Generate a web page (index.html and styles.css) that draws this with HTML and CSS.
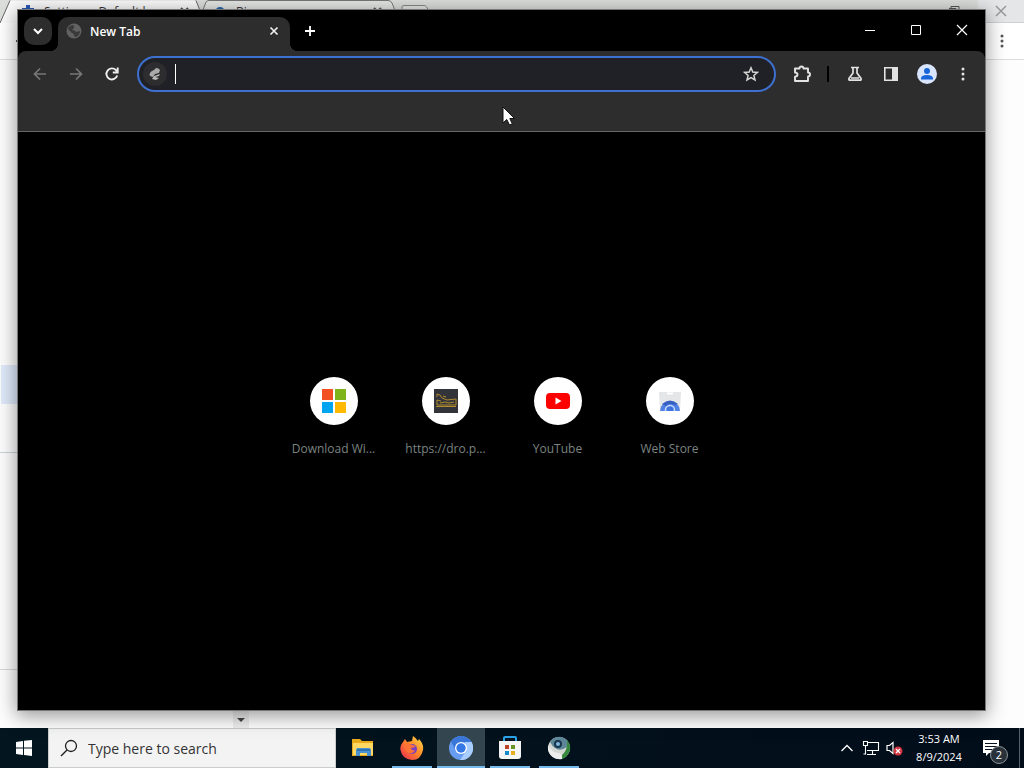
FILE: index.html
```html
<!DOCTYPE html>
<html lang="en">
<head>
<meta charset="utf-8">
<title>New Tab</title>
<link rel="stylesheet" href="styles.css">
</head>
<body>
<main class="desktop">
  <section class="back-window" aria-label="Settings window">
    <div class="back-strip">
      <svg class="back-shapes" width="432" height="23" viewBox="0 0 432 23" aria-hidden="true">
        <path d="M198 23 206 2Q207 .5 209 .5H388Q391 .5 392 3L400 23Z" fill="#e4e6e4" stroke="#777"/>
        <path d="M0 23 10 .5H194Q196 .5 197 3L206 23Z" fill="#fbfbfb"/>
        <path d="M0 23 10 .5M196 .5 205 23" fill="none" stroke="#666"/>
        <path d="M402 12V7Q402 5.500 404 5.500H424Q427 5.500 429 12" fill="#e4e6e4" stroke="#888"/>
        <path d="M22 12V8h4V5h4v3h4v4z" fill="#2859b8"/>
        <circle cx="220" cy="12" r="4" fill="none" stroke="#2368ac" stroke-width="2"/>
        <path d="m181 8 7 7m0-7-7 7m193-7 7 7m0-7-7 7" stroke="#555" stroke-width="2"/>
      </svg>
      <div class="back-tabs"><span>Settings - Default br</span><span>Bing</span></div>
      <div class="back-controls">
        <svg width="46" height="22" viewBox="0 0 46 22" aria-hidden="true"><path d="M17 8.500h7V14M19 8V6.500H27V12" fill="none" stroke="#555"/></svg>
        <button class="back-close" aria-label="Close settings"><svg width="12" height="12" viewBox="0 0 12 12"><path d="m1 1 10 10M11 1 1 11" stroke="#999" stroke-width="1.500"/></svg></button>
      </div>
    </div>
    <div class="back-toolbar">
      <svg width="18" height="16" viewBox="0 0 18 16" aria-hidden="true"><path d="M18 8h-2" stroke="#555" stroke-width="2"/></svg>
      <button class="back-more" aria-label="Settings menu"><svg width="4" height="14" viewBox="0 0 4 14" fill="#555"><circle cx="2" cy="2" r="1.500"/><circle cx="2" cy="7" r="1.500"/><circle cx="2" cy="12" r="1.500"/></svg></button>
    </div>
    <div class="back-page">
      <div class="back-nav"><div class="back-selected"></div></div>
      <div class="back-group"></div>
      <div class="back-foot"><span class="scroll-arrow"><svg width="8" height="4" viewBox="0 0 8 4"><path d="M0 0h8L4 4z" fill="#444"/></svg></span></div>
    </div>
  </section>

  <section class="window" aria-label="Browser">
    <header class="titlebar">
      <button class="tab-search" aria-label="Search tabs"><svg width="12" height="12" viewBox="0 0 12 12"><path d="m2 4 4 4 4-4" fill="none" stroke="#fff" stroke-width="2"/></svg></button>
      <div class="tab">
        <svg width="16" height="16" viewBox="0 0 16 16" aria-hidden="true"><circle cx="8" cy="8" r="7.500" fill="#626262"/><path d="M2 5q2-3 5-3 2 1 1 3L6 7q3 0 4 2l4-1q0 4-4 6-3-1-2-3-3-1-4-3-2-1-2-3Z" fill="#3a3a3a"/></svg>
        <span class="tab-title">New Tab</span>
        <button class="icon-button" aria-label="Close tab"><svg width="10" height="10" viewBox="0 0 10 10"><path d="m1.500 1.500 7 7M8.500 1.500l-7 7" stroke="#eee" stroke-width="1.700"/></svg></button>
      </div>
      <button class="new-tab" aria-label="New tab"><svg width="12" height="12" viewBox="0 0 12 12"><path d="M6 1v10M1 6h10" stroke="#fff" stroke-width="1.800"/></svg></button>
      <div class="window-controls">
        <button aria-label="Minimize"><svg width="12" height="12" viewBox="0 0 12 12"><path d="M1 6.500h10" stroke="#fff"/></svg></button>
        <button aria-label="Maximize"><svg width="12" height="12" viewBox="0 0 12 12"><path d="M1.500 1.500h9v9h-9z" fill="none" stroke="#fff"/></svg></button>
        <button aria-label="Close"><svg width="12" height="12" viewBox="0 0 12 12"><path d="m1 1 10 10M11 1 1 11" stroke="#fff" stroke-width="1.200"/></svg></button>
      </div>
    </header>
    <div class="chrome">
      <div class="toolbar">
        <button class="tool" aria-label="Back"><svg width="16" height="16" viewBox="0 0 16 16"><path d="M14 8H3m5-5.500L2.500 8 8 13.500" fill="none" stroke="#777" stroke-width="1.700"/></svg></button>
        <button class="tool" aria-label="Forward"><svg width="16" height="16" viewBox="0 0 16 16"><path d="M2 8h11M8 2.500 13.500 8 8 13.500" fill="none" stroke="#777" stroke-width="1.700"/></svg></button>
        <button class="tool" aria-label="Reload"><svg width="16" height="16" viewBox="0 0 16 16"><path d="M13.200 9.500A5.500 5.500 0 1 1 12 4.200L13.500 6M13.700 1.500V6.500H8.800" fill="none" stroke="#eee" stroke-width="1.900"/></svg></button>
        <div class="omnibox">
          <svg width="26" height="26" viewBox="0 0 26 26" aria-hidden="true"><circle cx="13" cy="13" r="12" fill="#2d2d2f"/><path d="M8 12q1-2 4-3l2-2q3 0 4 2l-1 3-4 1-2 3-3-1q-1-1 0-3Z" fill="#aaa"/><path d="m12 15 6-2-1 2-4 1 4 1-3 2-4-1Z" fill="#bbb"/></svg>
          <span class="caret"></span>
          <input type="text" aria-label="Address and search bar">
          <button class="icon-button" aria-label="Bookmark this tab"><svg width="16" height="16" viewBox="0 0 16 16"><path d="m8 1.800 1.800 4.200 4.600.4-3.500 3 1.100 4.500L8 11.500l-4 2.400 1.100-4.500-3.500-3 4.600-.4Z" fill="none" stroke="#d5d5d5" stroke-width="1.500"/></svg></button>
        </div>
        <button class="tool" aria-label="Extensions"><svg width="20" height="20" viewBox="0 0 20 20"><path d="M3 4.500H7.500Q7.500 2.500 9.500 2.500T11.500 4.500H16V8.500Q18 8.500 18 10.500T16 12.500V17H3V12.700Q5.500 12.500 5.500 10.600T3 8.500Z" fill="none" stroke="#e3e3e3" stroke-width="1.900" stroke-linejoin="round"/></svg></button>
        <span class="separator"></span>
        <button class="tool" aria-label="Experiments"><svg width="16" height="16" viewBox="0 0 16 16"><path d="M4 1.500h8M6 2v5L2 12.500Q1.500 14.200 3 14.200H13Q14.500 14.200 14 12.500L10 7V2M4 12h8" fill="none" stroke="#e3e3e3" stroke-width="1.700"/></svg></button>
        <button class="tool" aria-label="Side panel"><svg width="16" height="16" viewBox="0 0 16 16"><path d="M1.800 1.800h12.400v12.400H1.800z" fill="none" stroke="#e3e3e3" stroke-width="1.600"/><path d="M9 2h5v12H9z" fill="#e3e3e3"/></svg></button>
        <button class="tool" aria-label="Profile"><svg width="20" height="20" viewBox="0 0 20 20"><circle cx="10" cy="10" r="10" fill="#d8e5fc"/><circle cx="10" cy="7" r="3" fill="#1765d8"/><path d="M4 14.500Q4 11 10 11T16 14.500V15.500H4Z" fill="#1765d8"/></svg></button>
        <button class="tool" aria-label="Menu"><svg width="4" height="16" viewBox="0 0 4 16" fill="#e3e3e3"><circle cx="2" cy="3" r="1.500"/><circle cx="2" cy="8" r="1.500"/><circle cx="2" cy="13" r="1.500"/></svg></button>
      </div>
      <div class="bookmarks"></div>
    </div>
    <nav class="page" aria-label="Shortcuts">
      <a class="tile" href="#windows"><span class="tile-icon"><svg width="24" height="24" viewBox="0 0 24 24"><path d="M0 0h11v11H0z" fill="#f25022"/><path d="M13 0h11v11H13z" fill="#7fb51b"/><path d="M0 13h11v11H0z" fill="#00a4ef"/><path d="M13 13h11v11H13z" fill="#ffb900"/></svg></span><span class="tile-label">Download Wi...</span></a>
      <a class="tile" href="#dro"><span class="tile-icon"><svg width="24" height="24" viewBox="0 0 24 24"><path d="M0 0h24v24H0z" fill="#33343a"/><path d="M3 8V5l3 1 2 3 5 2 9-1v6H3V11l4 1M2 17.500h20M6 14l5-1 4 1 5-1M9 7l3 1" fill="none" stroke="#b18c2c"/></svg></span><span class="tile-label">https://dro.p...</span></a>
      <a class="tile" href="#youtube"><span class="tile-icon"><svg width="24" height="24" viewBox="0 0 24 24"><rect y="4" width="24" height="16" rx="4" fill="#f00"/><path d="m9.500 8.500 6 3.500-6 3.500z" fill="#fff"/></svg></span><span class="tile-label">YouTube</span></a>
      <a class="tile" href="#store"><span class="tile-icon"><svg width="24" height="24" viewBox="0 0 24 24"><path d="M1 3h22l-1 19H2z" fill="#e4e6e8"/><path d="M9 4.500h6" stroke="#fff" stroke-width="2"/><path d="M2 22a10 10 0 0 1 20 0Z" fill="#4f80e4"/><path d="M4 15q8-7 16 0l-4 1q-4-3-8 1Z" fill="#355fc0"/><circle cx="12" cy="21" r="4.500" fill="#3e73df" stroke="#c9dbfa" stroke-width="1.500"/><path d="M0 22h24v3H0z" fill="#fff"/></svg></span><span class="tile-label">Web Store</span></a>
    </nav>
  </section>
  <svg class="pointer" width="13" height="20" viewBox="0 0 13 20" aria-hidden="true"><path d="M1 1v16l3.800-3.500L7.500 19l2.800-1.200L7.800 12.500H12.500Z" fill="#fff" stroke="#111"/></svg>
</main>

<footer class="taskbar">
  <button class="start" aria-label="Start"><svg width="16" height="16" viewBox="0 0 16 16"><path d="m0 2 7-1v6.500H0Zm8-1.200L16 0v7.500H8ZM0 8.500h7V15l-7-1Zm8 0h8V16l-8-1Z" fill="#fff"/></svg></button>
  <label class="search">
    <svg width="18" height="18" viewBox="0 0 18 18" aria-hidden="true"><circle cx="11" cy="7" r="5.500" fill="none" stroke="#222" stroke-width="1.300"/><path d="m7 11-6 6" stroke="#222" stroke-width="1.500"/></svg>
    <input type="text" placeholder="Type here to search" aria-label="Type here to search">
  </label>
  <div class="apps">
    <button class="app" aria-label="File Explorer"><svg width="24" height="24" viewBox="0 0 24 24"><path d="M1 3h8l2 2h11v15H1z" fill="#e8a91b"/><path d="M2 7h20v12H2z" fill="#ffd864"/><path d="M5 20v-6q0-2 2-2h11q2 0 2 2v6h-4v-3H9v3z" fill="#4a92cf"/><path d="M6 13h13v2H6z" fill="#2d74b4"/></svg></button>
    <button class="app running" aria-label="Firefox"><svg width="24" height="24" viewBox="0 0 24 24"><defs><linearGradient id="fire" x1="1" y1="0" x2="0" y2="1"><stop stop-color="#ffe34a"/><stop offset=".45" stop-color="#ff8a28"/><stop offset="1" stop-color="#ed2454"/></linearGradient></defs><path d="M3 6 5 3l2 3 5-1 1-5q3 2 5 5l1-2q5 5 4 11-2 10-11 10Q2 23 .500 14-.500 10 3 6Z" fill="url(#fire)"/><circle cx="12" cy="13" r="5" fill="#7b3fc4"/><path d="M4 9q4-3 8 0l4 1q-2 2-5 2 0 3 4 2-2 4-6 3-5-2-5-8Z" fill="#ff7436"/></svg></button>
    <button class="app running active" aria-label="Chromium"><svg width="24" height="24" viewBox="0 0 24 24"><circle cx="12" cy="12" r="12" fill="#679df0"/><path d="M2 5.500A12 12 0 0 1 22.500 6H12L7 15Z" fill="#3976d8"/><path d="M22.500 6A12 12 0 0 1 11 24l6-9-1-9Z" fill="#a9cdff"/><circle cx="12" cy="12" r="6" fill="#fff"/><circle cx="12" cy="12" r="4.700" fill="#3478e5"/></svg></button>
    <button class="app running" aria-label="Microsoft Store"><svg width="24" height="24" viewBox="0 0 24 24"><path d="M6 7V2q0-1 1-1h10q1 0 1 1v5" fill="none" stroke="#2aa2e6" stroke-width="2"/><path d="M1 5h22v15q0 3-3 3H4q-3 0-3-3z" fill="#f5f5f5"/><path d="M7 9h4v4H7z" fill="#bd4327"/><path d="M13 9h4v4h-4z" fill="#679326"/><path d="M7 15h4v4H7z" fill="#168bcb"/><path d="M13 15h4v4h-4z" fill="#e8ae1e"/></svg></button>
    <button class="app running" aria-label="Network app"><svg width="24" height="24" viewBox="0 0 24 24"><circle cx="12" cy="12" r="11" fill="#d5d8d2"/><path d="M3 6A11 11 0 0 1 20 4q3 6 0 7-7 5-12 1-3-2-5-6Z" fill="#5d8798"/><path d="M20 4q4 5 3 10-2 7-8 9-3-2 2-6 4-5 3-13Z" fill="#36883d"/><path d="M1 9q3 7 10 8 5 0 4 6-5 1-9-2Q0 17 1 9Z" fill="#eee"/><circle cx="11" cy="8" r="4" fill="#17354c"/><circle cx="11" cy="8" r="2" fill="#7eb9dd"/></svg></button>
  </div>
  <div class="tray">
    <button class="tray-button" aria-label="Show hidden icons"><svg width="14" height="14" viewBox="0 0 14 14"><path d="m1.500 10 5.500-5.500 5.500 5.500" fill="none" stroke="#fff" stroke-width="1.300"/></svg></button>
    <button class="tray-button" aria-label="Network"><svg width="18" height="16" viewBox="0 0 18 16"><path d="M6 2.500h10.500v8H5M5 14.500h9M10.500 11v3M1.500 1.500h4v4h-4ZM3.500 6v8H1.500" fill="none" stroke="#fff" stroke-width="1.100"/></svg></button>
    <button class="tray-button" aria-label="Volume muted"><svg width="18" height="16" viewBox="0 0 18 16"><path d="M1 5.500h2.500l3.500-3v11l-3.500-3H1z" fill="none" stroke="#fff" stroke-width="1.200"/><circle cx="12" cy="11" r="4.500" fill="#d43440"/><path d="m10 9 4 4m0-4-4 4" stroke="#fff" stroke-width="1.300"/></svg></button>
    <button class="clock"><span>3:53 AM</span><span>8/9/2024</span></button>
    <button class="notices" aria-label="2 notifications"><svg width="20" height="20" viewBox="0 0 20 20"><path d="M2 2h16v13H8l-3 3v-3H2z" fill="#fff"/><path d="M4 5.500h12M4 8.500h12M4 11.500h8" stroke="#07121f"/></svg><span class="badge">2</span></button>
    <button class="peek" aria-label="Show desktop"></button>
  </div>
</footer>
</body>
</html>
```
FILE: styles.css
```css
* { box-sizing: border-box; }
body {
  margin: 0;
  height: 100vh;
  display: flex;
  flex-direction: column;
  overflow: hidden;
  font-family: "Open Sans", "Noto Sans", sans-serif;
  font-size: 12px;
}
button {
  border: 0;
  padding: 0;
  background: none;
  color: inherit;
  font: inherit;
  display: flex;
  align-items: center;
  justify-content: center;
}
input { border: 0; outline: 0; background: none; min-width: 0; font: inherit; }
svg { display: block; flex: none; }

.desktop { position: relative; flex: 1; min-height: 0; background: #fff; }

.back-window { height: 100%; display: flex; flex-direction: column; background: #fdfdfd; }
.back-strip {
  position: relative;
  height: 23px;
  flex: none;
  display: flex;
  justify-content: space-between;
  background: #dcdedc;
  border-bottom: 1px solid #d0d0d0;
}
.back-shapes { position: absolute; left: 0; top: 0; }
.back-tabs { position: relative; display: flex; padding-left: 44px; line-height: 24px; color: #333; }
.back-tabs span { width: 192px; white-space: nowrap; }
.back-controls { display: flex; }
.back-close { width: 46px; background: #e5e6e8; }
.back-toolbar {
  height: 37px;
  flex: none;
  display: flex;
  align-items: center;
  justify-content: space-between;
  border-bottom: 1px solid #dedede;
  background: #fff;
}
.back-more { width: 44px; height: 36px; }
.back-page { flex: 1; display: flex; flex-direction: column; }
.back-nav { width: 232px; height: 393px; padding: 305px 0 0 1px; border-bottom: 1px solid #ccd4d8; }
.back-selected { width: 120px; height: 39px; background: #dfeafa; }
.back-group { width: 232px; height: 217px; border-bottom: 1px solid #d4d8d8; }
.back-foot { flex: 1; display: flex; align-items: flex-end; padding-left: 233px; }
.scroll-arrow {
  width: 16px;
  height: 17px;
  display: flex;
  align-items: center;
  justify-content: center;
  background: #eee;
}

.window {
  position: absolute;
  inset: 10px 39px 18px 18px;
  display: flex;
  flex-direction: column;
  background: #000;
  box-shadow: 0 0 0 1px #777, 0 4px 18px 2px rgba(0, 0, 0, .4);
}
.titlebar { display: flex; height: 41px; flex: none; padding: 7px 0 0 6px; color: #fff; }
.tab-search { width: 28px; height: 28px; border-radius: 10px; background: #2d2d2d; }
.tab {
  position: relative;
  flex: 0 1 232px;
  height: 34px;
  margin-left: 6px;
  padding: 0 8px 6px;
  display: flex;
  align-items: center;
  gap: 8px;
  border-radius: 10px 10px 0 0;
  background: #2d2d2d;
}
.tab::before, .tab::after {
  content: "";
  position: absolute;
  bottom: 0;
  width: 8px;
  height: 8px;
}
.tab::before { right: 100%; background: radial-gradient(circle at 0 0, #000 8px, #2d2d2d 8px); }
.tab::after { left: 100%; background: radial-gradient(circle at 100% 0, #000 8px, #2d2d2d 8px); }
.tab-title { flex: 1; font-weight: 600; }
.icon-button { width: 16px; height: 16px; }
.new-tab { width: 28px; height: 28px; margin-left: 6px; }
.window-controls { display: flex; height: 26px; margin-left: auto; }
.window-controls button { width: 46px; }

.chrome {
  flex: none;
  background: #2d2d2d;
  border-bottom: 1px solid #666;
  border-radius: 8px 8px 0 0;
}
.toolbar { display: flex; align-items: center; height: 46px; padding: 0 4px; }
.tool { width: 36px; height: 36px; flex: none; }
.omnibox {
  flex: 1;
  height: 36px;
  margin: 0 8px 0 7px;
  padding: 0 15px 0 3px;
  display: flex;
  align-items: center;
  border: 2px solid #3d70cf;
  border-radius: 18px;
  background: #202126;
}
.omnibox input { flex: 1; color: #fff; font-size: 14px; }
.caret { width: 1px; height: 20px; margin-left: 7px; background: #fff; }
.separator { width: 2px; height: 16px; margin: 0 8px 0 7px; background: #000; }
.bookmarks { height: 34px; }

.page { flex: 1; display: flex; align-items: center; justify-content: center; padding-bottom: 8px; }
.tile {
  width: 112px;
  height: 112px;
  padding: 16px 8px 0;
  display: flex;
  flex-direction: column;
  align-items: center;
  gap: 14px;
  color: #7b8381;
  text-decoration: none;
}
.tile-icon {
  width: 48px;
  height: 48px;
  display: flex;
  align-items: center;
  justify-content: center;
  border-radius: 50%;
  background: #fff;
}
.tile-label { white-space: nowrap; line-height: 20px; }
.pointer { position: absolute; left: 502px; top: 106px; }

.taskbar {
  display: flex;
  height: 40px;
  flex: none;
  background: linear-gradient(90deg, #03161f, #020d1a);
  color: #fff;
}
.start { width: 48px; }
.search {
  width: 288px;
  display: flex;
  align-items: center;
  gap: 10px;
  padding-left: 11px;
  border: 1px solid #c8cccc;
  background: #f3f3f3;
}
.search input { flex: 1; padding: 0; font-size: 14px; }
.search input::placeholder { color: #333; opacity: 1; }
.apps { display: flex; gap: 1px; margin-left: 3px; }
.app { position: relative; width: 48px; }
.active { background: #33464f; }
.running::after {
  content: "";
  position: absolute;
  left: 4px;
  right: 4px;
  bottom: 0;
  height: 2px;
  background: #76b9ed;
}
.active::after { left: 0; right: 0; }
.tray { display: flex; margin-left: auto; }
.tray-button { width: 24px; }
.clock { width: 64px; flex-direction: column; font-size: 11px; line-height: 18px; }
.notices { position: relative; width: 48px; padding-right: 8px; }
.badge {
  position: absolute;
  left: 19px;
  top: 18px;
  width: 18px;
  height: 18px;
  border: 1px solid #8a9096;
  border-radius: 50%;
  background: #29323a;
  font-size: 11px;
  line-height: 16px;
}
.peek { width: 5px; border-left: 1px solid #59626b; }
```
